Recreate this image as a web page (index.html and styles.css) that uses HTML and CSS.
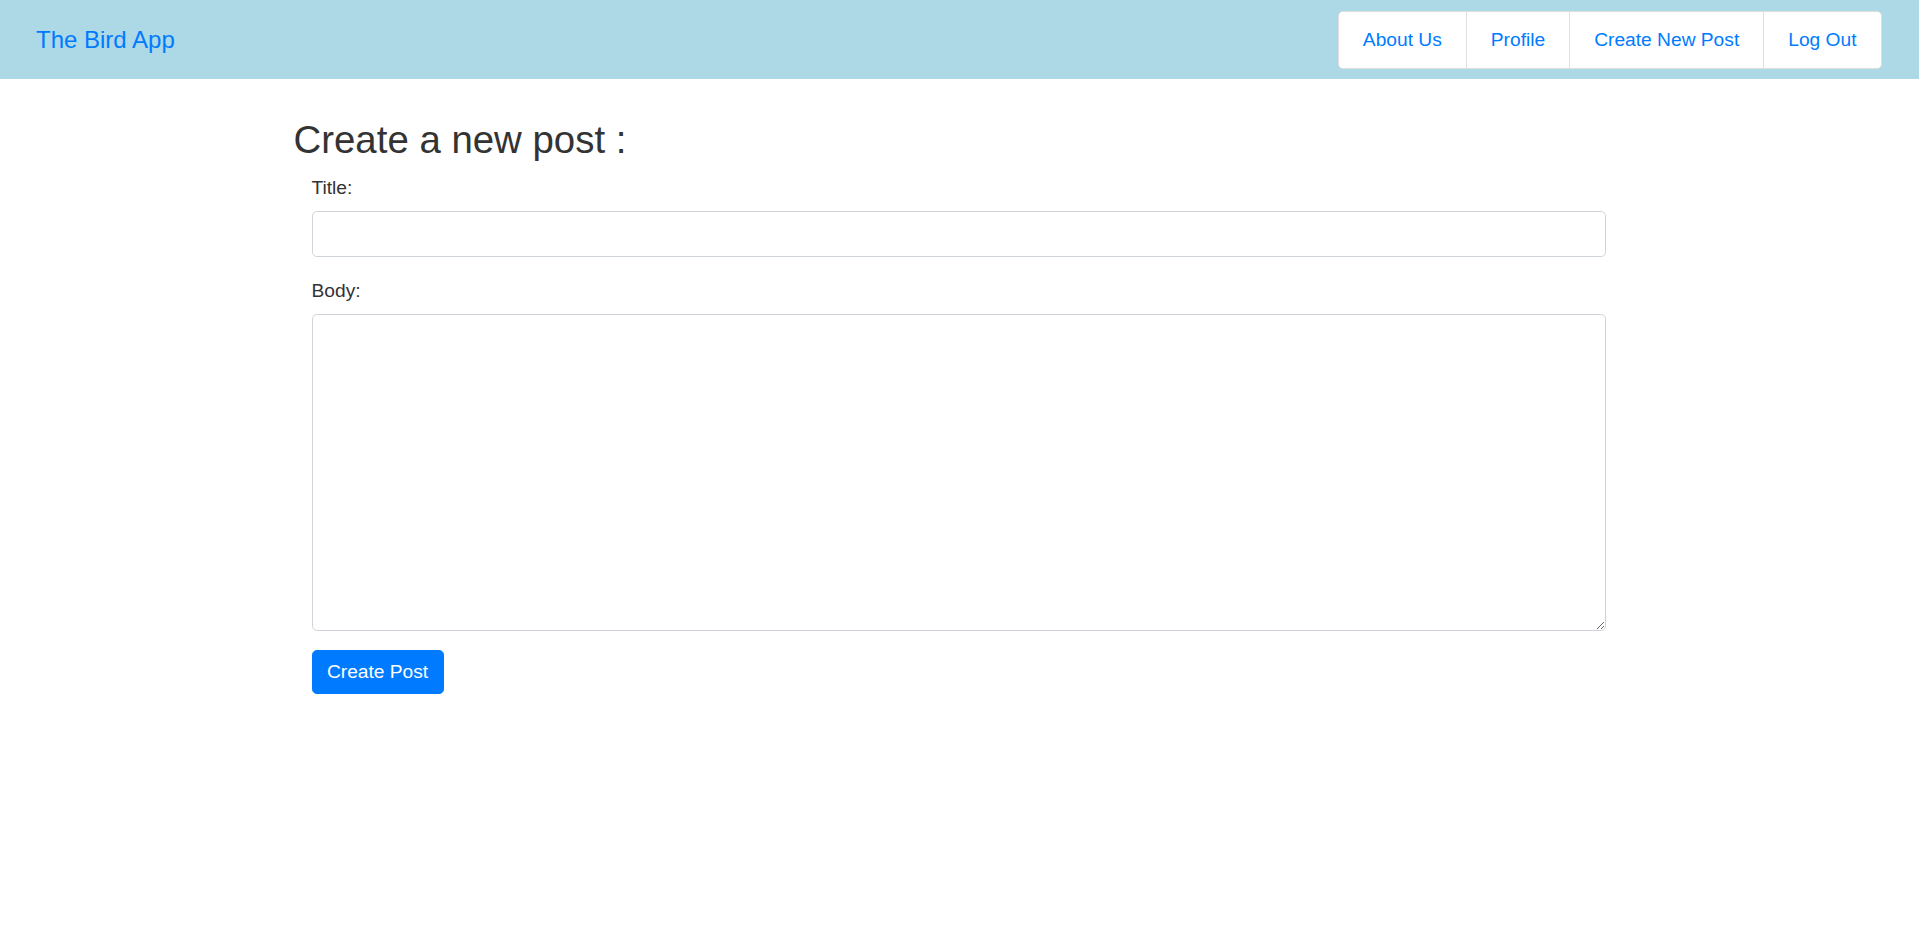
FILE: index.html
```html
<!DOCTYPE html>
<html lang="en">
<head>
<meta charset="utf-8">
<title>The Bird App</title>
<link rel="stylesheet" href="styles.css">
</head>
<body>
<header class="navbar">
  <a class="brand" href="#">The Bird App</a>
  <nav class="nav-group">
    <a class="nav-item" href="#">About Us</a>
    <a class="nav-item" href="#">Profile</a>
    <a class="nav-item" href="#">Create New Post</a>
    <a class="nav-item" href="#">Log Out</a>
  </nav>
</header>
<main class="container">
  <h2 class="page-title">Create a new post :</h2>
  <form class="post-form">
    <div class="form-group">
      <label class="form-label" for="title">Title:</label>
      <input class="form-control" id="title" type="text">
    </div>
    <div class="form-group">
      <label class="form-label" for="body">Body:</label>
      <textarea class="form-control form-textarea" id="body"></textarea>
    </div>
    <button class="btn-primary" type="button">Create Post</button>
  </form>
</main>
</body>
</html>
```
FILE: styles.css
```css
* { box-sizing: border-box; }
html, body {
  margin: 0;
  padding: 0;
  background: #fff;
  font-family: "Liberation Sans", Arial, sans-serif;
  color: #333;
}
.navbar {
  height: 79px;
  background: #add8e6;
  display: flex;
  align-items: center;
  justify-content: space-between;
  padding: 0 37.5px 0 36px;
}
.brand {
  color: #007bff;
  text-decoration: none;
  font-size: 24px;
  line-height: 36px;
  margin-top: 0;
}
.nav-group {
  display: flex;
  background: #fff;
  border: 1px solid #dfdfdf;
  border-radius: 4.8px;
  height: 58px;
}
.nav-item {
  display: flex;
  align-items: center;
  padding: 1px 24px 0;
  font-size: 19.2px;
  line-height: 28.8px;
  color: #007bff;
  text-decoration: none;
  border-left: 1px solid #dfdfdf;
}
.nav-item:first-child { border-left: none; }
.container {
  width: 1368px;
  margin: 0 auto;
  padding: 0 18px;
}
.page-title {
  font-size: 38.4px;
  line-height: 46px;
  font-weight: 500;
  color: #333;
  margin: 38px 0 9.6px;
}
.post-form {
  padding: 0 20px 0 18px;
}
.form-group {
  margin-bottom: 19.2px;
}
.form-label {
  display: block;
  font-size: 19.2px;
  line-height: 28.8px;
  padding-top: 1.2px;
  margin-bottom: 8.4px;
  color: #333;
}
.form-control {
  display: block;
  width: 100%;
  height: 45.6px;
  padding: 7.2px 14.4px;
  font-family: inherit;
  font-size: 19.2px;
  line-height: 28.8px;
  color: #495057;
  background: #fff;
  border: 1px solid #ced4da;
  border-radius: 4.8px;
  margin: 0;
}
.form-textarea {
  height: 316.4px;
  resize: vertical;
}
.btn-primary {
  display: inline-block;
  height: 44.5px;
  padding: 1.5px 14.4px 0;
  font-family: inherit;
  font-size: 19.2px;
  line-height: 28.8px;
  color: #fff;
  background: #007bff;
  border: 1px solid #007bff;
  border-radius: 4.8px;
  cursor: pointer;
}
```
